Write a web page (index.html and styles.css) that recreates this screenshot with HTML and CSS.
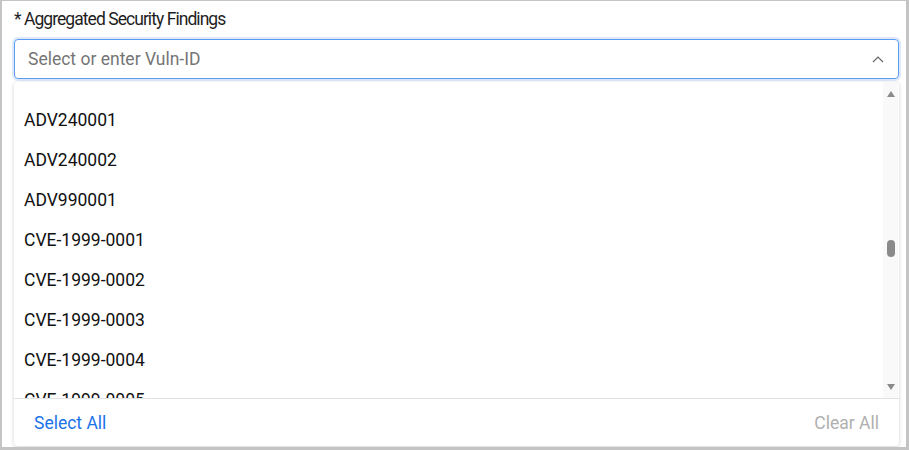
FILE: index.html
```html
<!DOCTYPE html>
<html>
<head>
<meta charset="utf-8">
<link rel="stylesheet" href="styles.css">
</head>
<body>
<div class="frame">
  <div class="label">* Aggregated Security Findings</div>
  <div class="select">
    <span class="placeholder">Select or enter Vuln-ID</span>
    <svg class="chev" width="12" height="8" viewBox="0 0 12 8"><path d="M1 7 L6 2 L11 7" fill="none" stroke="#666" stroke-width="1.2"/></svg>
  </div>
  <div class="dropdown">
    <div class="listwrap">
      <div class="list">
        <div class="item">ADV240001</div>
        <div class="item">ADV240002</div>
        <div class="item">ADV990001</div>
        <div class="item">CVE-1999-0001</div>
        <div class="item">CVE-1999-0002</div>
        <div class="item">CVE-1999-0003</div>
        <div class="item">CVE-1999-0004</div>
        <div class="item">CVE-1999-0005</div>
      </div>
      <div class="scrollbar">
        <div class="arrow up"></div>
        <div class="track"><div class="thumb"></div></div>
        <div class="arrow down"></div>
      </div>
    </div>
    <div class="footer">
      <span class="sel">Select All</span>
      <span class="clr">Clear All</span>
    </div>
  </div>
</div>
</body>
</html>
```
FILE: styles.css
```css
html, body {
  margin: 0;
  padding: 0;
  background: #fff;
}
body {
  font-family: Roboto, "Liberation Sans", sans-serif;
  overflow: hidden;
}
.frame {
  box-sizing: border-box;
  width: 909px;
  height: 450px;
  border-style: solid;
  border-color: #c4c4c4;
  border-width: 1px 3px 3px 2px;
  padding: 8px 7px 0 12px;
  overflow: hidden;
}
.label {
  font-size: 17.5px;
  letter-spacing: -0.95px;
  line-height: 20px;
  color: #1e1e1e;
}
.select {
  margin-top: 10px;
  height: 40px;
  box-sizing: border-box;
  border: 1px solid #5b9cf0;
  border-radius: 4px;
  box-shadow: 0 0 0 2px #dde9fb;
  display: flex;
  align-items: center;
  padding: 0 14px 0 13px;
}
.placeholder {
  flex: 1;
  font-size: 17.5px;
  color: #757575;
}
.chev {
  display: block;
}
.dropdown {
  margin-top: 3px;
  height: 364px;
  background: #fff;
  border-radius: 4px;
  box-shadow: 0 1px 4px rgba(0,0,0,0.18);
  display: flex;
  flex-direction: column;
  overflow: hidden;
}
.listwrap {
  height: 316px;
  display: flex;
  overflow: hidden;
}
.list {
  flex: 1;
  padding-top: 18px;
  overflow: hidden;
}
.item {
  height: 40px;
  line-height: 40px;
  padding-left: 10px;
  font-size: 17.5px;
  color: #111;
}
.scrollbar {
  width: 15px;
  background: #f9f9f9;
  display: flex;
  flex-direction: column;
  align-items: center;
  padding: 9px 0 8px;
  box-sizing: border-box;
  margin-right: 1px;
}
.arrow {
  width: 0;
  height: 0;
  border-left: 4px solid transparent;
  border-right: 4px solid transparent;
}
.arrow.up {
  border-bottom: 6px solid #8a8a8a;
}
.arrow.down {
  border-top: 6px solid #8a8a8a;
}
.track {
  flex: 1;
  width: 100%;
  display: flex;
  justify-content: center;
  padding-top: 143px;
  box-sizing: border-box;
}
.thumb {
  width: 8px;
  height: 17px;
  border-radius: 4px;
  background: #8a8a8a;
}
.footer {
  flex: 1;
  border-top: 1px solid #e2e2e2;
  display: flex;
  justify-content: space-between;
  align-items: center;
  padding: 0 20px;
  font-size: 17.5px;
}
.sel {
  color: #1a73e8;
}
.clr {
  color: #b0b0b0;
}
```
